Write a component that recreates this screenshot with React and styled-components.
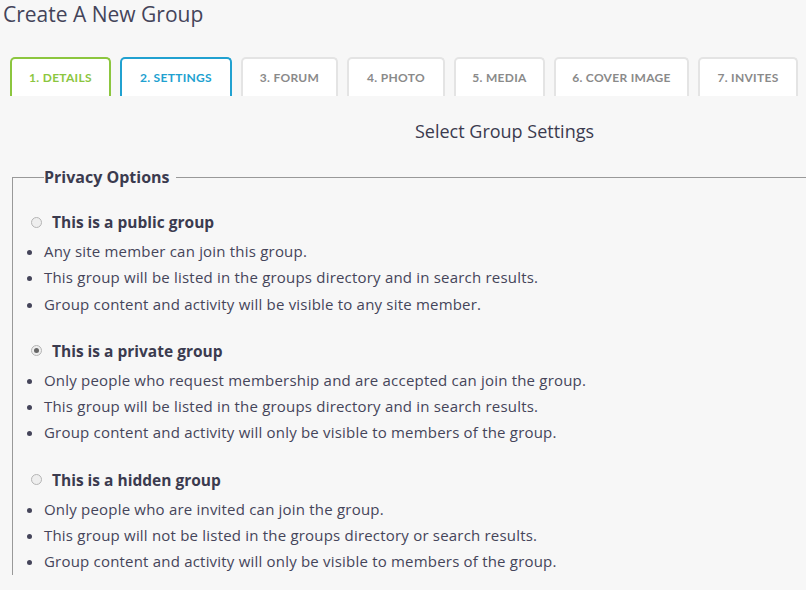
import React from "react";
import styled, { createGlobalStyle } from "styled-components";

const Global = createGlobalStyle`
  html, body { margin: 0; background: #f7f7f7; }
  body { font-family: "Open Sans", Lato, sans-serif; color: #3b3b4f; overflow: hidden; }
`;
const Page = styled.div` width: 803px; height: 590px; overflow: hidden; padding: 0 0 0 3px; `;
const Title = styled.h1`
  margin: 0; padding-top: 1px; font-size: 21px; font-weight: 400; line-height: 26px; color: #44445a;
`;
const Tabs = styled.div` display: flex; gap: 9px; margin: 30px 0 0 7px; font-family: Lato, sans-serif; `;
const Tab = styled.div`
  box-sizing: border-box; flex: none; width: ${p => p.w}px; height: 39px; background: #fff;
  border: 2px solid ${p => p.c || "#e4e4e4"}; border-bottom: none; border-radius: 5px 5px 0 0;
  display: flex; align-items: center; justify-content: center;
  font-size: 12px; font-weight: 700; letter-spacing: 0.3px; color: ${p => p.t || "#8a8a8a"};
`;
const Sub = styled.div` text-align: center; margin: 24px 0 0 200px; font-size: 18px; line-height: 22px; color: #3b3b4f; `;
const Fieldset = styled.fieldset`
  margin: 24px 0 0 9px; padding: 0 0 0 18px; border: 1px solid #999; border-right: none; border-bottom: none;
  width: 820px;
`;
const Legend = styled.legend` padding: 0 6px 0 0; margin-left: 13px; font-size: 16px; font-weight: 700; color: #3b3b4f; `;
const Option = styled.div` margin-top: 23px; `;
const Label = styled.label` display: flex; align-items: center; gap: 10px; font-size: 15.5px; font-weight: 700; height: 22px; `;
const Radio = styled.span`
  width: 9px; height: 9px; border-radius: 50%; border: 1px solid #b5b5b5; background: #eee; position: relative;
  &::after { content: ""; display: ${p => p.on ? "block" : "none"}; position: absolute; left: 2px; top: 2px; width: 5px; height: 5px; border-radius: 50%; background: #666; }
`;
const List = styled.ul` margin: 5px 0 0; padding-left: 13px; list-style: disc; font-size: 15px; line-height: 26.3px; font-weight: 400; letter-spacing: 0.2px; color: #45455a; `;

const tabs = [
  ["1. DETAILS", 101, "#8cc63f", "#8cc63f"],
  ["2. SETTINGS", 112, "#21a1d0", "#21a1d0"],
  ["3. FORUM", 97], ["4. PHOTO", 98], ["5. MEDIA", 91], ["6. COVER IMAGE", 135], ["7. INVITES", 100],
];
const opts = [
  ["This is a public group", false, ["Any site member can join this group.", "This group will be listed in the groups directory and in search results.", "Group content and activity will be visible to any site member."]],
  ["This is a private group", true, ["Only people who request membership and are accepted can join the group.", "This group will be listed in the groups directory and in search results.", "Group content and activity will only be visible to members of the group."]],
  ["This is a hidden group", false, ["Only people who are invited can join the group.", "This group will not be listed in the groups directory or search results.", "Group content and activity will only be visible to members of the group."]],
];

export default function App() {
  return (
    <Page>
      <Global />
      <Title>Create A New Group</Title>
      <Tabs>{tabs.map(([t, w, c, tc]) => <Tab key={t} w={w} c={c} t={tc}>{t}</Tab>)}</Tabs>
      <Sub>Select Group Settings</Sub>
      <Fieldset>
        <Legend>Privacy Options</Legend>
        {opts.map(([l, on, items]) => (
          <Option key={l}>
            <Label><Radio on={on} />{l}</Label>
            <List>{items.map(x => <li key={x}>{x}</li>)}</List>
          </Option>
        ))}
      </Fieldset>
    </Page>
  );
}
